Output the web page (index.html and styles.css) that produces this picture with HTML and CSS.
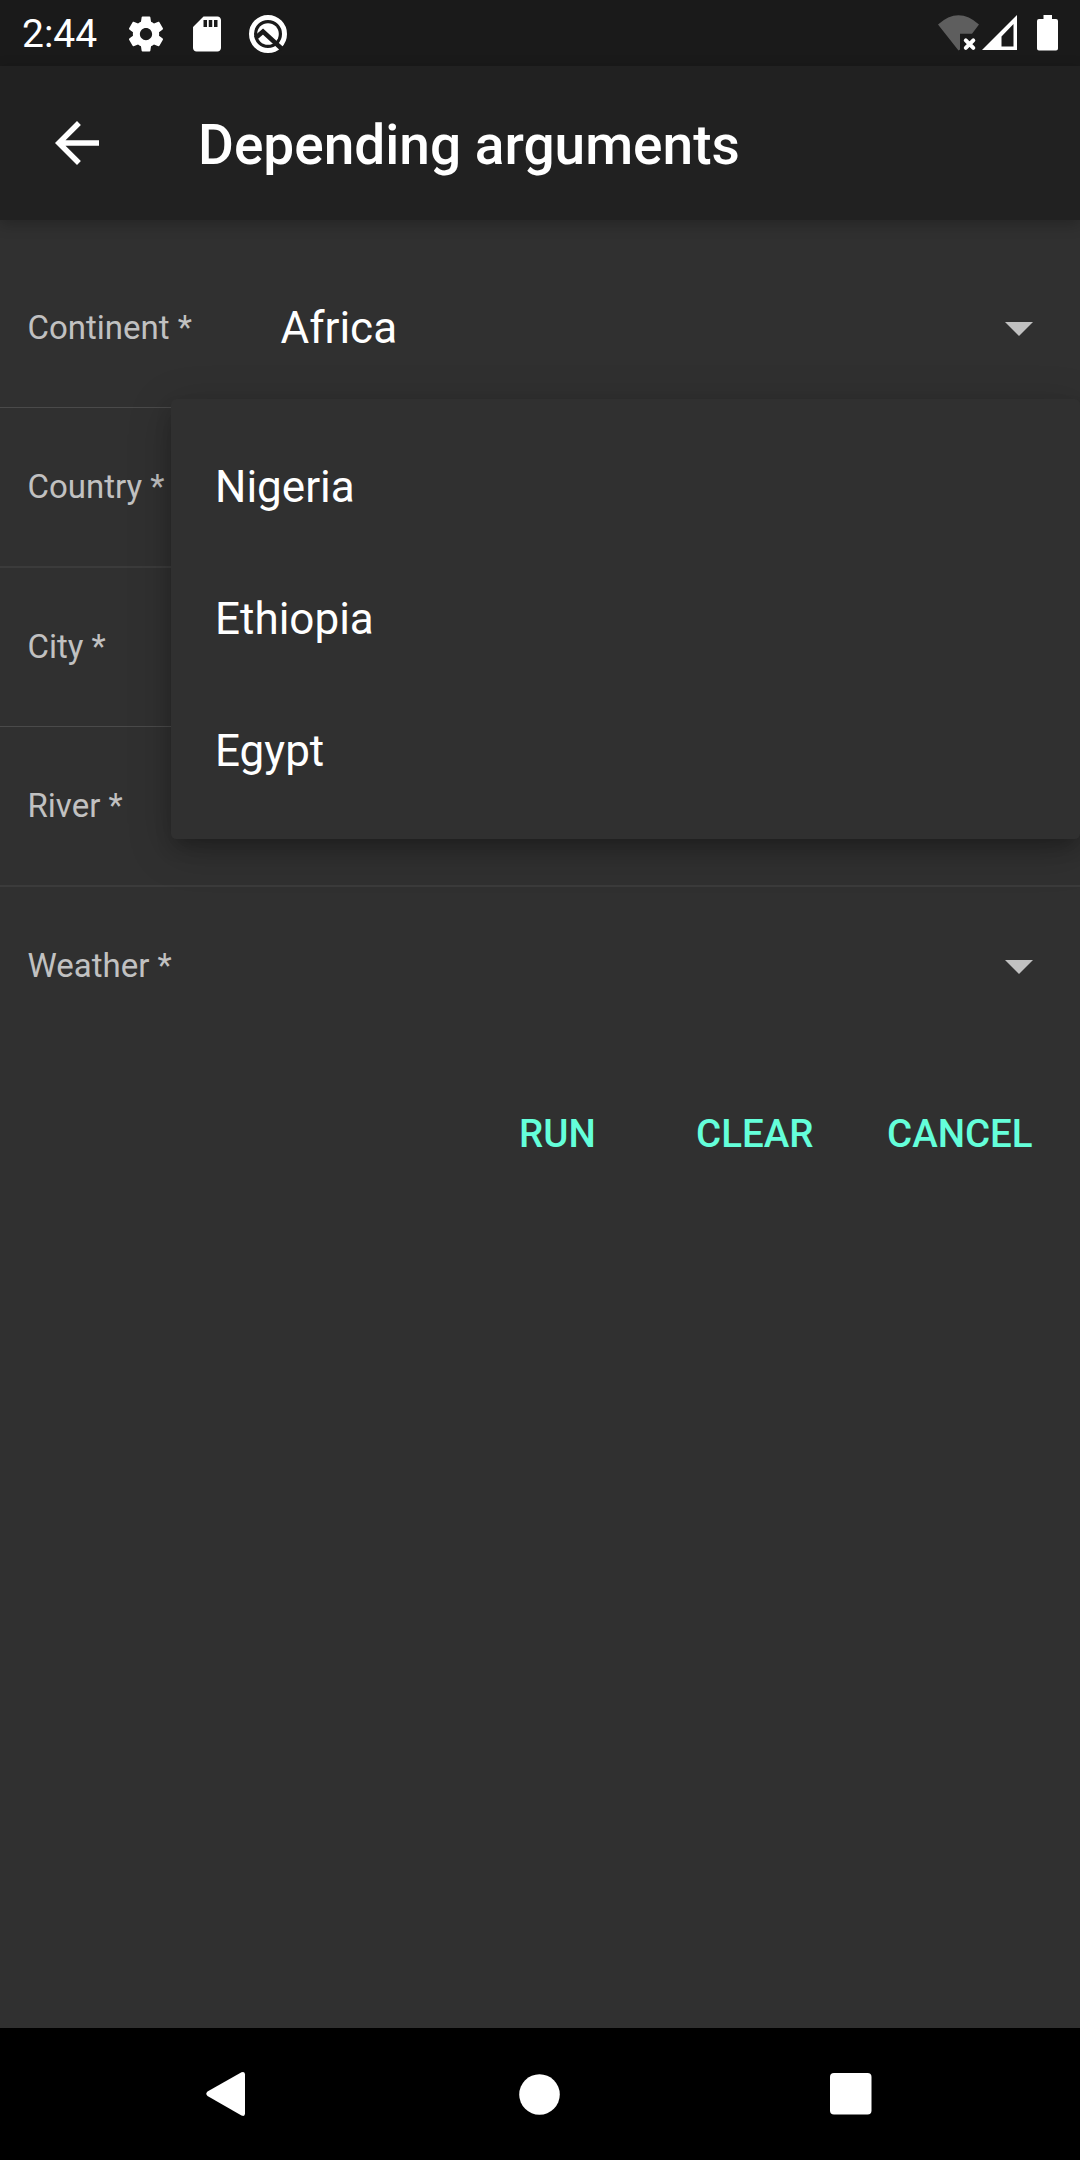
FILE: index.html
```html
<!DOCTYPE html>
<html lang="en">
<head>
<meta charset="utf-8">
<title>Depending arguments</title>
<link rel="stylesheet" href="styles.css">
</head>
<body>
<div class="screen">
  <div class="status-bar">
    <span class="time">2:44</span>
    <svg class="gear" width="42" height="42" viewBox="0 0 24 24"><path d="M19.43 12.98c.04-.32.07-.64.07-.98s-.03-.66-.07-.98l2.11-1.65c.19-.15.24-.42.12-.64l-2-3.46c-.12-.22-.39-.3-.61-.22l-2.49 1c-.52-.4-1.08-.73-1.69-.98l-.38-2.65C14.46 2.18 14.25 2 14 2h-4c-.25 0-.46.18-.49.42l-.38 2.65c-.61.25-1.17.59-1.69.98l-2.49-1c-.23-.09-.49 0-.61.22l-2 3.46c-.13.22-.07.49.12.64l2.11 1.65c-.04.32-.07.65-.07.98s.03.66.07.98l-2.11 1.65c-.19.15-.24.42-.12.64l2 3.46c.12.22.39.3.61.22l2.49-1c.52.4 1.08.73 1.69.98l.38 2.65c.03.24.24.42.49.42h4c.25 0 .46-.18.49-.42l.38-2.65c.61-.25 1.17-.59 1.69-.98l2.49 1c.23.09.49 0 .61-.22l2-3.46c.12-.22.07-.49-.12-.64l-2.11-1.65zM12 15.5c-1.93 0-3.5-1.57-3.5-3.5s1.57-3.5 3.5-3.5 3.5 1.57 3.5 3.5-1.57 3.5-3.5 3.5z"/></svg>
    <svg class="sd" width="42" height="42" viewBox="0 0 24 24"><path d="M18 2h-8L4.02 8 4 20c0 1.100.9 2 2 2h12c1.100 0 2-.9 2-2V4c0-1.100-.9-2-2-2zm-6 6h-2V4h2v4zm3 0h-2V4h2v4zm3 0h-2V4h2v4z"/></svg>
    <svg class="q" width="40" height="40" viewBox="0 0 40 40">
      <circle class="ring" cx="20" cy="20" r="16.500"/>
      <circle cx="20" cy="20" r="10.800"/>
      <path class="cut" d="M7.500 24L15 17.600L34 35"/>
    </svg>
    <svg class="signals" width="121" height="38" viewBox="0 0 121 38">
      <path class="wifi" d="M0 9.500Q20.500-9 41 9.500L34 18.800H22V34.500L20.500 35.500Z"/>
      <path class="cross" d="M27.800 25.300L35.300 32.800M35.300 25.300L27.800 32.800"/>
      <path fill-rule="evenodd" d="M79 0V35H44ZM75.500 9L63.500 21.500V31.500H75.500Z"/>
      <path d="M105.500 0H114V4H118Q120 4 120 6V33.500Q120 35.500 118 35.500H101Q99 35.500 99 33.500V6Q99 4 101 4H105.500Z"/>
    </svg>
  </div>
  <header class="app-bar">
    <svg width="66" height="66" viewBox="0 0 24 24"><path d="M20 11H7.830l5.590-5.590L12 4l-8 8 8 8 1.410-1.410L7.830 13H20v-2z"/></svg>
    <h1>Depending arguments</h1>
  </header>
  <main>
    <div class="row first"><span class="label">Continent *</span><span class="value">Africa</span><svg class="arrow" width="28" height="14" viewBox="0 0 28 14"><path d="M0 0H28L14 14Z"/></svg></div>
    <div class="row soft"><span class="label">Country *</span></div>
    <div class="row short"><span class="label">City *</span></div>
    <div class="row soft"><span class="label">River *</span></div>
    <div class="row last"><span class="label">Weather *</span><span class="value"></span><svg class="arrow" width="28" height="14" viewBox="0 0 28 14"><path d="M0 0H28L14 14Z"/></svg></div>
    <div class="actions"><span>RUN</span><span>CLEAR</span><span>CANCEL</span></div>
  </main>
  <ul class="menu"><li>Nigeria</li><li>Ethiopia</li><li>Egypt</li></ul>
  <nav class="nav-bar">
    <svg width="40" height="46" viewBox="0 0 40 46"><path d="M1.500 20.500L35.500 1.300Q39 0 39 3.500V42.500Q39 46 35.500 44.500L1.500 25Q-1 22.800 1.500 20.500Z"/></svg>
    <svg class="home" width="41" height="41" viewBox="0 0 41 41"><circle cx="20.500" cy="20.500" r="20.300"/></svg>
    <svg width="42" height="42" viewBox="0 0 42 42"><rect width="41.500" height="41.500" rx="4"/></svg>
  </nav>
</div>
</body>
</html>
```
FILE: styles.css
```css
body { margin: 0; background: #303030; }
.screen {
  position: relative;
  display: flex;
  flex-direction: column;
  width: 1080px;
  height: 2160px;
  overflow: hidden;
  background: #303030;
  color: #fff;
  font-family: Roboto, "Noto Sans", sans-serif;
}
svg { display: block; flex: none; fill: #fff; }

.status-bar {
  box-sizing: border-box;
  display: flex;
  align-items: center;
  height: 66px;
  padding: 0 22px;
  background: #1a1a1a;
}
.time { width: 103px; padding-top: 2px; font-size: 39px; line-height: 68px; }
.gear, .sd, .q { margin-top: 1px; }
.sd { margin-left: 19px; }
.q { margin-left: 20px; }
.ring { fill: none; stroke: #fff; stroke-width: 5; }
.cut { fill: none; stroke: #1a1a1a; stroke-width: 4.6; }
.signals { margin-left: auto; margin-right: -1px; padding-top: 2px; }
.wifi { fill: #5e5e5e; }
.cross { fill: none; stroke: #fff; stroke-width: 4; stroke-linecap: round; }

.app-bar {
  position: relative;
  display: flex;
  align-items: center;
  gap: 88px;
  height: 154px;
  padding-left: 44px;
  background: #212121;
  box-shadow: 0 4px 14px rgba(0, 0, 0, .24);
}
h1 { margin: 0; padding-top: 3px; font-size: 55px; line-height: 64px; font-weight: 500; }

main { flex: 1; padding-top: 29px; }
.row {
  box-sizing: border-box;
  display: flex;
  align-items: center;
  height: 160px;
  padding: 0 47px 1px 27.5px;
  border-bottom: 1px solid #4a4a4a;
}
.first, .short { height: 159px; }
.soft { border-bottom: 2px solid #3b3b3b; }
.last { padding-bottom: 2px; border-bottom-color: transparent; }
.label { width: 253px; font-size: 33px; color: #c1c1c1; }
.value { flex: 1; font-size: 44px; }
.arrow { margin-top: 3px; fill: #c1c1c1; }
.actions {
  display: grid;
  grid-template-columns: 177px 191px 145px;
  justify-content: end;
  padding: 64px 48px 0 0;
  color: #64ffda;
  font-size: 38.5px;
  font-weight: 500;
  line-height: 46px;
}

.menu {
  position: absolute;
  left: 170.5px;
  top: 398.5px;
  box-sizing: border-box;
  width: 909.5px;
  height: 440px;
  margin: 0;
  padding: 22px 44px 22px 44.5px;
  list-style: none;
  border-radius: 5.5px;
  background: #303030;
  box-shadow: 0 10px 18px -4px rgba(0, 0, 0, .25), 0 10px 44px rgba(0, 0, 0, .22);
  font-size: 44px;
  line-height: 132px;
}

.nav-bar {
  display: flex;
  align-items: center;
  justify-content: space-between;
  height: 132px;
  padding: 0 208px 0 206px;
  background: #000;
}
.home { margin-left: 3px; }
```
